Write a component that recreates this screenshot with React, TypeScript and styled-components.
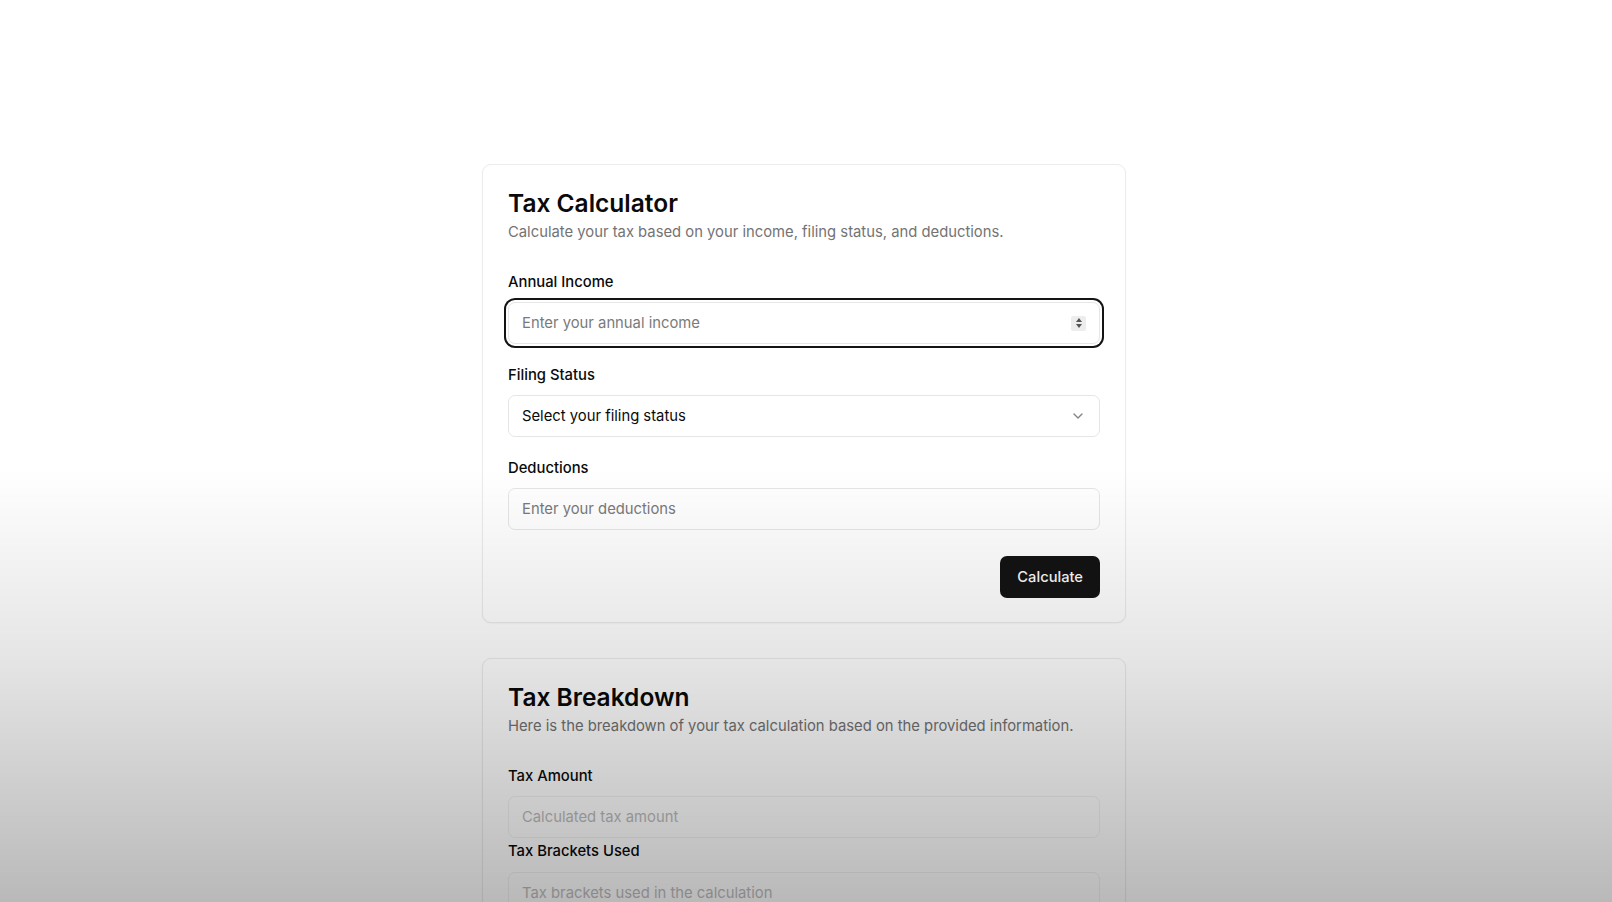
import React from 'react';
import styled, { createGlobalStyle } from 'styled-components';
import { ChevronDown } from 'lucide-react';

const GlobalStyle = createGlobalStyle`
  html, body {
    margin: 0;
    padding: 0;
    background: #ffffff;
    scrollbar-width: none;
  }
  body::-webkit-scrollbar {
    display: none;
  }
  * {
    box-sizing: border-box;
  }
  body {
    font-family: Inter, "Noto Sans", "Liberation Sans", sans-serif;
    color: #0a0a0a;
  }
`;

const Page = styled.main`
  display: flex;
  flex-direction: column;
  align-items: center;
  gap: 35px;
  padding: 164px 4px 80px 0;
  min-height: 100vh;
`;

/* the video fade that greys out the lower half of the frame */
const Fade = styled.div`
  position: fixed;
  inset: 0;
  pointer-events: none;
  background: linear-gradient(
    to bottom,
    rgba(0, 0, 0, 0) 0%,
    rgba(0, 0, 0, 0) 52%,
    rgba(0, 0, 0, 0.1) 73%,
    rgba(0, 0, 0, 0.275) 100%
  );
`;

const Card = styled.section`
  width: 644px;
  background: #ffffff;
  border: 1px solid #ececec;
  border-radius: 9px;
  box-shadow: 0 1px 2px rgba(0, 0, 0, 0.04);
  padding: 26px 25px 24px;
`;

const Title = styled.h2`
  margin: 0;
  font-size: 24.5px;
  line-height: 24px;
  font-weight: 600;
  color: #0a0a0a;
`;

const Subtitle = styled.p`
  margin: 7px 0 0;
  font-size: 14.8px;
  line-height: 20px;
  color: #737373;
`;

const Fields = styled.div<{ $gap: number }>`
  display: flex;
  flex-direction: column;
  gap: ${(p) => p.$gap}px;
  margin-top: 30px;
`;

const Field = styled.div<{ $inner?: number }>`
  display: flex;
  flex-direction: column;
  gap: ${(p) => p.$inner ?? 10}px;
`;

const Label = styled.label`
  font-size: 14.8px;
  line-height: 20px;
  font-weight: 500;
  color: #0a0a0a;
`;

const Box = styled.div<{ $focused?: boolean; $disabled?: boolean }>`
  display: flex;
  align-items: center;
  height: 42px;
  padding: 0 13px;
  border: 1px solid #e6e6e6;
  border-radius: 7px;
  background: #ffffff;
  opacity: ${(p) => (p.$disabled ? 0.5 : 1)};
  box-shadow: ${(p) => (p.$focused ? '0 0 0 2px #ffffff, 0 0 0 4px #141414' : 'none')};
`;

const TextInput = styled.input`
  flex: 1;
  min-width: 0;
  border: 0;
  outline: none;
  background: transparent;
  padding: 0;
  font-family: inherit;
  font-size: 14.8px;
  color: #0a0a0a;
  &::placeholder {
    color: #7a7a7a;
  }
`;

const Spinner = styled.div`
  display: flex;
  flex-direction: column;
  align-items: center;
  justify-content: center;
  gap: 2px;
  width: 15px;
  height: 15px;
  background: #ededed;
  border-radius: 2px;

  &::before,
  &::after {
    content: '';
    width: 0;
    height: 0;
    border-left: 3px solid transparent;
    border-right: 3px solid transparent;
  }
  &::before {
    border-bottom: 4px solid #555;
  }
  &::after {
    border-top: 4px solid #555;
  }
`;

const SelectText = styled.span`
  flex: 1;
  font-size: 14.8px;
  color: #0a0a0a;
`;

const Chevron = styled(ChevronDown)`
  width: 16px;
  height: 16px;
  opacity: 0.5;
`;

const Actions = styled.div`
  display: flex;
  justify-content: flex-end;
  margin-top: 26px;
`;

const Button = styled.button`
  height: 42px;
  padding: 0 17px;
  border: 0;
  border-radius: 7px;
  background: #141414;
  color: #fafafa;
  font-family: inherit;
  font-size: 14.7px;
  font-weight: 500;
  cursor: pointer;
`;

export default function App() {
  return (
    <>
      <GlobalStyle />
      <Page>
        <Card>
          <Title>Tax Calculator</Title>
          <Subtitle>Calculate your tax based on your income, filing status, and deductions.</Subtitle>
          <Fields $gap={21}>
            <Field>
              <Label>Annual Income</Label>
              <Box $focused>
                <TextInput placeholder="Enter your annual income" />
                <Spinner />
              </Box>
            </Field>
            <Field>
              <Label>Filing Status</Label>
              <Box>
                <SelectText>Select your filing status</SelectText>
                <Chevron />
              </Box>
            </Field>
            <Field>
              <Label>Deductions</Label>
              <Box>
                <TextInput placeholder="Enter your deductions" />
              </Box>
            </Field>
          </Fields>
          <Actions>
            <Button>Calculate</Button>
          </Actions>
        </Card>

        <Card>
          <Title>Tax Breakdown</Title>
          <Subtitle>Here is the breakdown of your tax calculation based on the provided information.</Subtitle>
          <Fields $gap={3}>
            <Field>
              <Label>Tax Amount</Label>
              <Box $disabled>
                <TextInput disabled placeholder="Calculated tax amount" />
              </Box>
            </Field>
            <Field $inner={11}>
              <Label>Tax Brackets Used</Label>
              <Box $disabled>
                <TextInput disabled placeholder="Tax brackets used in the calculation" />
              </Box>
            </Field>
          </Fields>
        </Card>
      </Page>
      <Fade />
    </>
  );
}
